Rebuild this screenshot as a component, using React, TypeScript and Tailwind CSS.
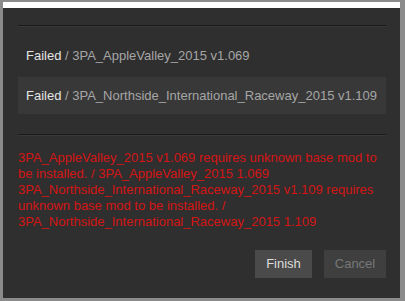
export default function App() {
  const errorLines = [
    "3PA_AppleValley_2015 v1.069 requires unknown base mod to",
    "be installed. / 3PA_AppleValley_2015 1.069",
    "3PA_Northside_International_Raceway_2015 v1.109 requires",
    "unknown base mod to be installed. /",
    "3PA_Northside_International_Raceway_2015 1.109",
  ];

  return (
    <div
      className="flex h-[301px] w-[405px] flex-col bg-[#8b8b8b] pb-[3px] pl-[3px] pr-[5px] pt-[2px]"
      style={{ fontFamily: '"Liberation Sans", Arial, sans-serif' }}
    >
      <div className="h-[6px] bg-white" />
      <div className="flex flex-1 flex-col bg-[#2f2f2f] pl-[15px] pr-[14px] pt-[17px]">
        <div className="h-px bg-[#1a1a1a]" />
        <div className="h-px bg-[#393939]" />

        <div className="mt-[10px] flex h-[37px] items-center px-[8px] text-[13px]">
          <span className="text-[#e4e4e4]">Failed</span>
          <span className="whitespace-pre text-[#a6a6a6]"> / 3PA_AppleValley_2015 v1.069</span>
        </div>
        <div className="mt-[3px] flex h-[37px] items-center bg-[#383838] px-[8px] text-[13px]">
          <span className="text-[#e4e4e4]">Failed</span>
          <span className="whitespace-pre text-[#a6a6a6]"> / 3PA_Northside_International_Raceway_2015 v1.109</span>
        </div>

        <div className="mt-[20px] h-px bg-[#1a1a1a]" />
        <div className="h-px bg-[#393939]" />

        <div className="mt-[14px] text-[13px] leading-[16px] text-[#d41515]">
          {errorLines.map((line) => (
            <div key={line} className="whitespace-nowrap">
              {line}
            </div>
          ))}
        </div>

        <div className="mt-[20px] flex justify-end gap-[12px]">
          <button className="h-[28px] w-[57px] bg-[#4a4a4a] text-[13px] text-[#dcdcdc]">Finish</button>
          <button className="h-[28px] w-[62px] bg-[#3f3f3f] text-[13px] text-[#777777]">Cancel</button>
        </div>
      </div>
    </div>
  );
}
